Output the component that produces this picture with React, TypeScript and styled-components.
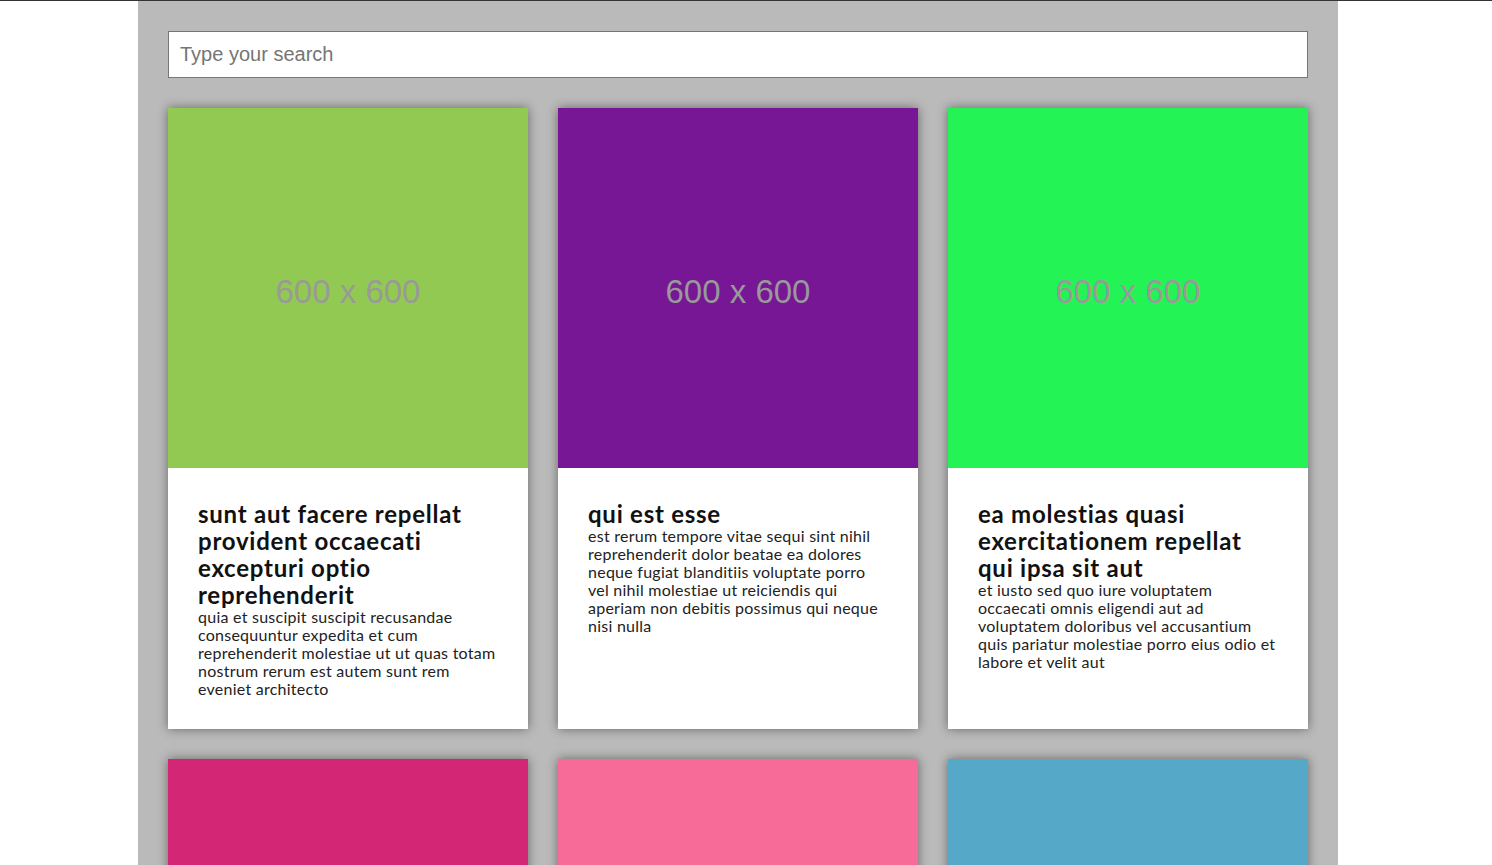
import React from "react";
import styled, { createGlobalStyle } from "styled-components";

const GlobalStyle = createGlobalStyle`
  html, body { margin: 0; padding: 0; }
  body {
    background: #ffffff;
    border-top: 1px solid #333333;
    font-family: Lato, "Noto Sans", sans-serif;
  }
`;

const Shell = styled.div`
  padding-right: 16px;
`;

const Page = styled.main`
  width: 1200px;
  margin: 0 auto;
  padding: 30px;
  box-sizing: border-box;
  background: #bababa;
  display: flex;
  flex-direction: column;
  gap: 30px;
`;

const SearchInput = styled.input`
  width: 100%;
  height: 47px;
  box-sizing: border-box;
  border: 1px solid #767676;
  padding: 0 11px;
  font-family: "Liberation Sans", Arial, sans-serif;
  font-size: 20px;
  color: #222;
  background: #fff;
  outline: none;
  &::placeholder { color: #757575; }
`;

const Grid = styled.section`
  display: grid;
  grid-template-columns: repeat(3, 360px);
  gap: 30px;
`;

const Card = styled.article`
  background: #fff;
  box-shadow: 0 0 10px rgba(0, 0, 0, 0.45);
  display: flex;
  flex-direction: column;
`;

const Thumb = styled.div<{ $bg: string }>`
  height: 360px;
  box-sizing: border-box;
  padding-top: 8px;
  background: ${(p) => p.$bg};
  display: flex;
  align-items: center;
  justify-content: center;
  font-family: "Liberation Sans", Arial, sans-serif;
  font-size: 33px;
  color: #999999;
`;

const Body = styled.div`
  padding: 32px 30px 31px;
`;

const Title = styled.h2`
  margin: 0;
  font-size: 24px;
  line-height: 27px;
  letter-spacing: 0.75px;
  font-weight: 700;
  color: #111;
`;

const Text = styled.p`
  margin: 0;
  font-size: 16px;
  line-height: 18px;
  letter-spacing: 0.25px;
  color: #222;
`;

const posts = [
  {
    color: "#92c952",
    title: "sunt aut facere repellat provident occaecati excepturi optio reprehenderit",
    body: "quia et suscipit suscipit recusandae consequuntur expedita et cum reprehenderit molestiae ut ut quas totam nostrum rerum est autem sunt rem eveniet architecto",
  },
  {
    color: "#771796",
    title: "qui est esse",
    body: "est rerum tempore vitae sequi sint nihil reprehenderit dolor beatae ea dolores neque fugiat blanditiis voluptate porro vel nihil molestiae ut reiciendis qui aperiam non debitis possimus qui neque nisi nulla",
  },
  {
    color: "#24f355",
    title: "ea molestias quasi exercitationem repellat qui ipsa sit aut",
    body: "et iusto sed quo iure voluptatem occaecati omnis eligendi aut ad voluptatem doloribus vel accusantium quis pariatur molestiae porro eius odio et labore et velit aut",
  },
  {
    color: "#d32776",
    title: "eum et est occaecati",
    body: "ullam et saepe reiciendis voluptatem adipisci sit amet autem assumenda provident rerum culpa quis hic commodi nesciunt rem tenetur doloremque ipsam iure quis sunt voluptatem rerum illo velit",
  },
  {
    color: "#f66b97",
    title: "nesciunt quas odio",
    body: "repudiandae veniam quaerat sunt sed alias aut fugiat sit autem sed est voluptatem omnis possimus esse voluptatibus quis est aut tenetur dolor neque",
  },
  {
    color: "#56a8c8",
    title: "dolorem eum magni eos aperiam quia",
    body: "ut aspernatur corporis harum nihil quis provident sequi mollitia nobis aliquid molestiae perspiciatis et ea nemo ab reprehenderit accusantium quas voluptate dolores velit et doloremque molestiae",
  },
];

export default function App() {
  return (
    <>
      <GlobalStyle />
      <Shell>
        <Page>
          <SearchInput type="text" placeholder="Type your search" />
          <Grid>
            {posts.map((p, i) => (
              <Card key={i}>
                <Thumb $bg={p.color}>600 x 600</Thumb>
                <Body>
                  <Title>{p.title}</Title>
                  <Text>{p.body}</Text>
                </Body>
              </Card>
            ))}
          </Grid>
        </Page>
      </Shell>
    </>
  );
}
